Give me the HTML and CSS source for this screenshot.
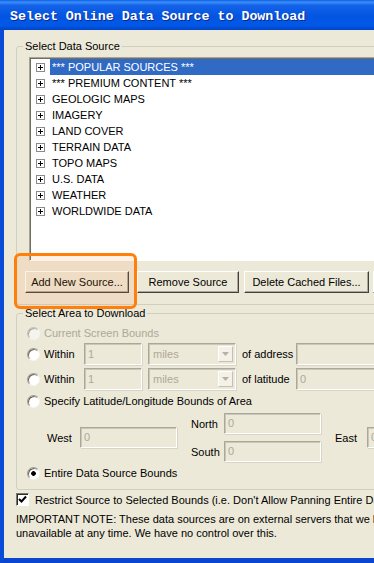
FILE: index.html
```html
<!DOCTYPE HTML>
<html lang="en">
<head>
    <meta charset="utf-8">
    <title>Select Online Data Source to Download</title>
    <link rel="stylesheet" href="styles.css">
</head>
<body>
    <div class="window">
        <div class="titlebar">Select Online Data Source to Download</div>
        <div class="frame">
            <div class="client">
                <fieldset class="group">
                    <legend>Select Data Source</legend>
                    <div class="tree">
                        <div class="node selected"><svg width="9" height="9"><rect x="0.5" y="0.5" width="8" height="8" fill="#fff" stroke="#8a8a8a"/><path d="M2 4.5h5M4.5 2v5" stroke="#000"/></svg><span class="node-label">*** POPULAR SOURCES ***</span></div>
                        <div class="node"><svg width="9" height="9"><rect x="0.5" y="0.5" width="8" height="8" fill="#fff" stroke="#8a8a8a"/><path d="M2 4.5h5M4.5 2v5" stroke="#000"/></svg><span class="node-label">*** PREMIUM CONTENT ***</span></div>
                        <div class="node"><svg width="9" height="9"><rect x="0.5" y="0.5" width="8" height="8" fill="#fff" stroke="#8a8a8a"/><path d="M2 4.5h5M4.5 2v5" stroke="#000"/></svg><span class="node-label">GEOLOGIC MAPS</span></div>
                        <div class="node"><svg width="9" height="9"><rect x="0.5" y="0.5" width="8" height="8" fill="#fff" stroke="#8a8a8a"/><path d="M2 4.5h5M4.5 2v5" stroke="#000"/></svg><span class="node-label">IMAGERY</span></div>
                        <div class="node"><svg width="9" height="9"><rect x="0.5" y="0.5" width="8" height="8" fill="#fff" stroke="#8a8a8a"/><path d="M2 4.5h5M4.5 2v5" stroke="#000"/></svg><span class="node-label">LAND COVER</span></div>
                        <div class="node"><svg width="9" height="9"><rect x="0.5" y="0.5" width="8" height="8" fill="#fff" stroke="#8a8a8a"/><path d="M2 4.5h5M4.5 2v5" stroke="#000"/></svg><span class="node-label">TERRAIN DATA</span></div>
                        <div class="node"><svg width="9" height="9"><rect x="0.5" y="0.5" width="8" height="8" fill="#fff" stroke="#8a8a8a"/><path d="M2 4.5h5M4.5 2v5" stroke="#000"/></svg><span class="node-label">TOPO MAPS</span></div>
                        <div class="node"><svg width="9" height="9"><rect x="0.5" y="0.5" width="8" height="8" fill="#fff" stroke="#8a8a8a"/><path d="M2 4.5h5M4.5 2v5" stroke="#000"/></svg><span class="node-label">U.S. DATA</span></div>
                        <div class="node"><svg width="9" height="9"><rect x="0.5" y="0.5" width="8" height="8" fill="#fff" stroke="#8a8a8a"/><path d="M2 4.5h5M4.5 2v5" stroke="#000"/></svg><span class="node-label">WEATHER</span></div>
                        <div class="node"><svg width="9" height="9"><rect x="0.5" y="0.5" width="8" height="8" fill="#fff" stroke="#8a8a8a"/><path d="M2 4.5h5M4.5 2v5" stroke="#000"/></svg><span class="node-label">WORLDWIDE DATA</span></div>
                    </div>
                    <div class="buttons">
                        <button class="btn btn-add">Add New Source...</button>
                        <button class="btn btn-remove">Remove Source</button>
                        <button class="btn btn-delete">Delete Cached Files...</button>
                        <button class="btn btn-edit">Edit Source...</button>
                    </div>
                </fieldset>

                <fieldset class="group area">
                    <legend>Select Area to Download</legend>
                    <div class="row row-plain">
                        <span class="radio disabled"></span>
                        <span class="label disabled-text">Current Screen Bounds</span>
                    </div>
                    <div class="row row-field">
                        <span class="radio"></span>
                        <span class="label within">Within</span>
                        <span class="textbox small">1</span>
                        <span class="combo"><span class="combo-text">miles</span><span class="combo-btn"><svg width="7" height="4"><path d="M0 0h7L3.5 4z" fill="#b5b2a5"/></svg></span></span>
                        <span class="label of">of address</span>
                        <span class="textbox wide"></span>
                    </div>
                    <div class="row row-field">
                        <span class="radio"></span>
                        <span class="label within">Within</span>
                        <span class="textbox small">1</span>
                        <span class="combo"><span class="combo-text">miles</span><span class="combo-btn"><svg width="7" height="4"><path d="M0 0h7L3.5 4z" fill="#b5b2a5"/></svg></span></span>
                        <span class="label of">of latitude</span>
                        <span class="textbox wide">0</span>
                    </div>
                    <div class="row row-plain row-specify">
                        <span class="radio"></span>
                        <span class="label">Specify Latitude/Longitude Bounds of Area</span>
                    </div>
                    <div class="bounds">
                        <div class="bound-col">
                            <div class="bound"><span class="bound-label">West</span><span class="textbox coord">0</span></div>
                        </div>
                        <div class="bound-col stacked">
                            <div class="bound"><span class="bound-label">North</span><span class="textbox coord">0</span></div>
                            <div class="bound"><span class="bound-label">South</span><span class="textbox coord">0</span></div>
                        </div>
                        <div class="bound-col">
                            <div class="bound"><span class="bound-label east">East</span><span class="textbox coord">0</span></div>
                        </div>
                    </div>
                    <div class="row row-plain row-entire">
                        <span class="radio checked"></span>
                        <span class="label">Entire Data Source Bounds</span>
                    </div>
                </fieldset>

                <div class="check-row">
                    <span class="checkbox"><svg width="9" height="9"><path d="M1 4l2.5 2.5L8 1.5" fill="none" stroke="#000" stroke-width="2"/></svg></span>
                    <span class="label">Restrict Source to Selected Bounds (i.e. Don't Allow Panning Entire Data Source)</span>
                </div>
                <p class="note">IMPORTANT NOTE: These data sources are on external servers that we have no control over and may be<br>unavailable at any time. We have no control over this.</p>
            </div>
        </div>
        <div class="callout"></div>
    </div>
</body>
</html>
```

FILE: styles.css
```css
/* Base */
body {
    margin: 0;
    font-family: "Liberation Sans", Arial, sans-serif;
    font-size: 11px;
    color: #000;
    background: #ece9d8;
}
.window {
    position: relative;
    width: 374px;
    height: 563px;
    display: flex;
    flex-direction: column;
    overflow: hidden;
}

/* Title bar */
.titlebar {
    flex: none;
    height: 30px;
    box-sizing: border-box;
    padding: 3px 0 0 10px;
    line-height: 27px;
    background: linear-gradient(180deg, #0a5fea 0%, #3d8ff7 7%, #1462e8 18%, #0255e2 55%, #0258e6 85%, #0044c8 100%);
    color: #fff;
    font-family: "Liberation Mono", "Courier New", monospace;
    font-weight: bold;
    font-size: 13.3px;
    white-space: nowrap;
    text-shadow: 1px 1px 0 #0a2a8c;
}
.frame {
    flex: 1;
    min-height: 0;
    border-left: 4px solid #0a4cd8;
    border-bottom: 5px solid #0a46d0;
    overflow: hidden;
}
.client {
    width: 520px;
    height: 100%;
    box-sizing: border-box;
    padding: 10px 0 0 12px;
    background: #ece9d8;
}

/* Group boxes */
.group {
    margin: 0;
    padding: 4px 0 11px 6px;
    border: 1px solid #d0d0bf;
    border-radius: 3px;
    width: 480px;
}
.group legend {
    padding: 0 2px;
    line-height: 13px;
}

/* Tree */
.tree {
    margin-left: 6px;
    height: 204px;
    box-sizing: border-box;
    background: #fff;
    border: 1px solid;
    border-color: #a7a495 #fff #fff #a7a495;
    box-shadow: inset 1px 1px 0 #716f64;
    padding: 1px 0 0 1px;
}
.node {
    display: flex;
    align-items: center;
    height: 16px;
    padding-left: 5px;
}
.node svg {
    flex: none;
}
.node-label {
    flex: 1;
    margin-left: 5px;
    padding: 0 2px;
    line-height: 16px;
    white-space: nowrap;
}
.node.selected .node-label {
    background: #316ac5;
    color: #fff;
}

/* Buttons */
.buttons {
    display: flex;
    gap: 5px;
    margin: 10px 0 0 2px;
}
.btn {
    flex: none;
    height: 22px;
    padding: 0;
    font: inherit;
    color: #000;
    background: #ece9d8;
    border: 1px solid;
    border-color: #fff #404040 #404040 #fff;
    box-shadow: inset -1px -1px 0 #aca899;
}
.btn-add { width: 104px; margin-right: 3px; }
.btn-remove { width: 102px; }
.btn-delete { width: 125px; margin-right: -1px; }
.btn-edit { width: 90px; }

/* Area group */
.area {
    margin-top: 2px;
    padding: 0 0 8px 6px;
}
.row {
    display: flex;
    align-items: center;
    white-space: nowrap;
}
.row-plain {
    height: 20px;
    margin-top: 3px;
}
.row-field {
    height: 22px;
    margin-bottom: 3px;
}
.row-specify {
    height: 16px;
    margin-top: 0;
}
.row-entire {
    height: 16px;
    margin-top: 3px;
}
.radio {
    flex: none;
    width: 13px;
    height: 13px;
    margin-left: 4px;
    box-sizing: border-box;
    border-radius: 50%;
    border: 1px solid;
    border-color: #a09d90 #f6f5f0 #f6f5f0 #a09d90;
    box-shadow: inset 1px 1px 0 #6b685c;
    background: #fff;
}
.radio.disabled {
    border-color: #c4c1b4 #f6f5f0 #f6f5f0 #c4c1b4;
    box-shadow: inset 1px 1px 0 #aca899;
    background: #f4f3ee;
}
.radio.checked {
    background: radial-gradient(circle, #000 0 2px, #fff 2.6px);
}
.label {
    margin-left: 4px;
}
.disabled-text {
    color: #aca899;
}
.within {
    width: 40px;
}
.of {
    width: 54px;
    margin-left: 6px;
}

/* Inputs */
.textbox {
    flex: none;
    display: block;
    box-sizing: border-box;
    height: 22px;
    padding: 2px 0 0 3px;
    line-height: 16px;
    color: #aca899;
    background: #ece9d8;
    border: 1px solid;
    border-color: #aca899 #fff #fff #aca899;
    box-shadow: inset 1px 1px 0 #c9c7ba, 1px 1px 0 #d8d5c8;
}
.small { width: 58px; }
.wide { width: 150px; }
.coord {
    width: 97px;
    height: 21px;
    line-height: 15px;
}
.combo {
    flex: none;
    display: flex;
    align-items: center;
    width: 88px;
    height: 22px;
    margin-left: 6px;
    box-sizing: border-box;
    border: 1px solid;
    border-color: #aca899 #fff #fff #aca899;
    box-shadow: inset 1px 1px 0 #c9c7ba, 1px 1px 0 #d8d5c8;
}
.combo-text {
    flex: 1;
    padding-left: 4px;
    color: #aca899;
}
.combo-btn {
    display: flex;
    align-items: center;
    justify-content: center;
    width: 15px;
    height: 16px;
    margin-right: 2px;
    box-sizing: border-box;
    background: #f3f1e8;
    border: 1px solid;
    border-color: #fff #c4c1b4 #c4c1b4 #fff;
}

/* Bounds */
.bounds {
    display: flex;
    align-items: center;
    height: 49px;
    margin: 4px 0 0 24px;
}
.bound-col + .bound-col {
    margin-left: 14px;
}
.stacked {
    display: flex;
    flex-direction: column;
    gap: 7px;
}
.bound {
    display: flex;
    align-items: center;
}
.bound-label {
    width: 33px;
}
.bound-label.east {
    width: 32px;
}

/* Checkbox and note */
.check-row {
    display: flex;
    align-items: center;
    margin-top: 3px;
    height: 13px;
    white-space: nowrap;
}
.checkbox {
    flex: none;
    display: flex;
    align-items: center;
    justify-content: center;
    width: 13px;
    height: 13px;
    box-sizing: border-box;
    background: #fff;
    border: 1px solid;
    border-color: #7a786c #fff #fff #7a786c;
    box-shadow: inset 1px 1px 0 #2c2b26;
}
.check-row .label {
    margin-left: 6px;
}
.note {
    margin: 6px 0 0;
    line-height: 14px;
    white-space: nowrap;
}

/* Highlight around the Add button */
.callout {
    position: absolute;
    left: 14px;
    top: 253px;
    width: 123px;
    height: 56px;
    box-sizing: border-box;
    border: 3px solid #ff7f0a;
    border-radius: 6px;
    background: rgba(255, 150, 60, 0.13);
}
```
